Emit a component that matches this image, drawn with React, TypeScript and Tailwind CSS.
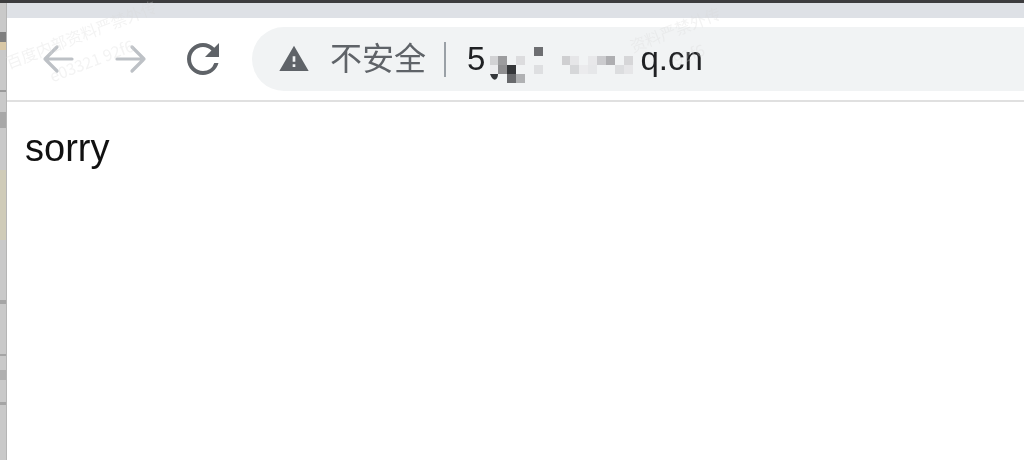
const mosaic: [number, number, string][] = [
  [490, 56, '#d2d2d4'], [498, 56, '#9c9c9e'], [516, 56, '#dcdcde'],
  [490, 65, '#ececee'], [498, 65, '#8f8f91'], [507, 65, '#35373a'],
  [507, 74, '#68696c'], [516, 74, '#b0b1b3'],
  [534, 47, '#6d6e71'], [534, 65, '#dedfe1'],
  [562, 56, '#cfcfd1'], [570, 56, '#e6e6e8'], [570, 65, '#d6d7d9'], [579, 65, '#ebebed'],
  [588, 56, '#e8e8ea'], [588, 65, '#e6e7e9'], [597, 56, '#cbcbce'], [606, 56, '#aeaeb1'],
  [615, 65, '#dcdddf'], [624, 56, '#d6d6d8'], [624, 65, '#e6e6e8'],
]

const Sliver = () => (
  <div className="flex w-[7px] shrink-0 flex-col bg-[#c9c9c9] border-r border-[#b5b5b5]">
    <div className="h-[29px]" />
    <div className="h-[10px] bg-[#7f7f7f]" />
    <div className="h-[8px] bg-[#d9c8a6]" />
    <div className="h-[40px]" />
    <div className="h-[2px] bg-[#9a9a9a]" />
    <div className="h-[20px]" />
    <div className="h-[16px] bg-[#a8a8a8]" />
    <div className="h-[42px]" />
    <div className="h-[70px] bg-[#cfcbb8]" />
    <div className="h-[60px]" />
    <div className="h-[4px] bg-[#a5a5a5]" />
    <div className="h-[50px]" />
    <div className="h-[2px] bg-[#a5a5a5]" />
    <div className="h-[14px]" />
    <div className="h-[10px] bg-[#b0b0b0]" />
    <div className="h-[22px]" />
    <div className="h-[3px] bg-[#a5a5a5]" />
  </div>
)

const Toolbar = () => (
  <div className="flex h-[82px] items-center pl-[35px]">
    <svg width="32" height="30" viewBox="0 0 32 30" fill="none" stroke="#bdc1c6" strokeWidth="3.2" strokeLinecap="round" strokeLinejoin="round" className="shrink-0">
      <path d="M30 15H3M15 3 3 15l12 12" />
    </svg>
    <svg width="32" height="30" viewBox="0 0 32 30" fill="none" stroke="#bdc1c6" strokeWidth="3.2" strokeLinecap="round" strokeLinejoin="round" className="ml-[41px] shrink-0">
      <path d="M2 15h27M17 3l12 12-12 12" />
    </svg>
    <svg width="48" height="48" viewBox="0 0 24 24" fill="#5f6368" className="ml-[32px] shrink-0">
      <path d="M17.65 6.35A7.958 7.958 0 0 0 12 4c-4.42 0-7.99 3.58-7.99 8s3.57 8 7.99 8c3.73 0 6.84-2.55 7.73-6h-2.08A5.99 5.99 0 0 1 12 18c-3.31 0-6-2.69-6-6s2.69-6 6-6c1.66 0 3.14.69 4.22 1.78L13 11h7V4l-2.35 2.35z" />
    </svg>
    <div className="ml-[25px] flex h-[64px] flex-1 items-center rounded-l-full bg-[#f1f3f4] pl-[26px]">
      <svg width="32" height="32" viewBox="0 0 24 24" fill="#5f6368" className="shrink-0">
        <path d="M1 21h22L12 2 1 21zm12-3h-2v-2h2v2zm0-4h-2v-4h2v4z" />
      </svg>
      <span className="ml-[20px] text-[32px] leading-[40px] text-[#5f6368] font-['Liberation_Sans','Noto_Sans_CJK_SC',sans-serif]">不安全</span>
      <div className="ml-[18px] h-[35px] w-[2px] bg-[#9aa0a6]" />
      <div className="ml-[21px] flex items-center text-[33px] leading-[40px] text-[#202124] font-['Liberation_Sans',sans-serif]">
        <span>5</span>
        <svg width="155" height="50" viewBox="485 34 155 50">
          {mosaic.map(([x, y, fill]) => (
            <rect key={`${x}-${y}`} x={x} y={y} width="9" height="9" fill={fill} />
          ))}
          <path d="M490 74h8c0 6-5 9-8 0z" fill="#35373a" />
        </svg>
        <span>q.cn</span>
      </div>
    </div>
  </div>
)

const Watermark = ({ className, line1, line2 }: { className: string; line1: string; line2: string }) => (
  <div className={`absolute -rotate-[21deg] text-[16px] leading-[28px] whitespace-nowrap text-[#d8d8d8] opacity-30 font-['Noto_Sans_CJK_SC',sans-serif] ${className}`}>
    <div>{line1}</div>
    <div className="pl-[36px]">{line2}</div>
  </div>
)

export default function App() {
  return (
    <div className="relative flex h-[460px] w-[1024px] flex-col overflow-hidden bg-white blur-[0.5px]">
      <div className="h-[3px] shrink-0 bg-[#3c3c3e]" />
      <div className="flex flex-1">
        <Sliver />
        <div className="flex flex-1 flex-col">
          <div className="h-[15px] bg-[#dee1e6]" />
          <Toolbar />
          <div className="h-[2px] bg-[#e0e0e0]" />
          <div className="pl-[18px] pt-[25px] text-[38px] leading-[42px] text-[#111] font-['Liberation_Sans',sans-serif]">sorry</div>
        </div>
      </div>
      <Watermark className="left-[6px] top-[19px]" line1="百度内部资料严禁外传" line2="e03321 92f6" />
      <Watermark className="left-[632px] top-[14px]" line1="资料严禁外传" line2="92f6" />
    </div>
  )
}
